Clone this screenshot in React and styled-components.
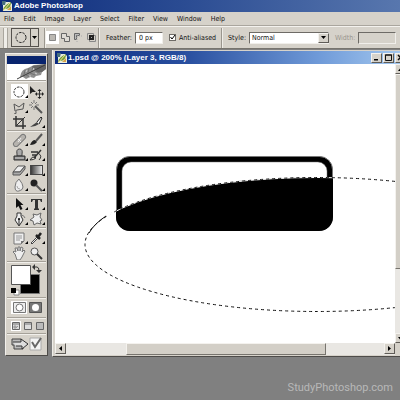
import React from "react";
import styled, { createGlobalStyle } from "styled-components";

const Global = createGlobalStyle`
  * { box-sizing: border-box; }
  body { margin: 0; background: #808080; }
  button, input, select { font: inherit; color: inherit; margin: 0; padding: 0; border-radius: 0; }
  svg { display: block; flex: none; }
`;

const Shell = styled.div`
  min-height: 100vh;
  display: flex;
  flex-direction: column;
  overflow: hidden;
  background: #808080;
  color: #111;
  font: 7px/12px "DejaVu Sans Condensed", "DejaVu Sans", sans-serif;
`;
const AppTitle = styled.header`
  display: flex;
  align-items: center;
  gap: 2px;
  height: 12px;
  padding-left: 2px;
  background: linear-gradient(90deg, #0d2b7b, #2a4b92 45%, #5877ae);
  color: #fff;
`;
const Heading = styled.h1`
  margin: 0;
  font: 700 8px/12px "Liberation Sans", Arial, sans-serif;
  white-space: nowrap;
`;
const MenuBar = styled.nav`
  display: flex;
  gap: 9px;
  height: 14px;
  padding-left: 4px;
  background: #d6d2ca;
  border-bottom: 1px solid #aaa69e;
`;
const MenuItem = styled.button`
  border: 0;
  background: none;
  line-height: 14px;
`;
const OptionsBar = styled.div`
  display: flex;
  align-items: center;
  height: 23px;
  padding-left: 3px;
  background: #d6d2ca;
  border-top: 1px solid #f4f2ee;
  border-bottom: 1px solid #77746e;
  white-space: nowrap;
  > * { flex: none; }
`;
const Grip = styled.span`
  width: 5px;
  height: 20px;
  margin-right: 3px;
  border: solid #aaa69e;
  border-width: 0 1px;
  background: #efede8;
`;
const ToolPick = styled.button`
  display: flex;
  align-items: center;
  width: 28px;
  height: 19px;
  border: 1px solid #55524e;
  background: #d6d2ca;
`;
const Divider = styled.span`
  width: 2px;
  height: 20px;
  margin: 0 ${(p) => p.$after}px 0 ${(p) => p.$before}px;
  border-left: 1px solid #9a968e;
  border-right: 1px solid #efede8;
`;
const ModeButton = styled.button`
  display: grid;
  place-items: center;
  width: 13px;
  height: 13px;
  border: 0;
  background: ${(p) => (p.$on ? "#fff" : "none")};
`;
const Field = styled.label`
  display: flex;
  align-items: center;
  gap: 3px;
  margin-right: ${(p) => p.$after}px;
  color: ${(p) => (p.$off ? "#99958e" : "#111")};
`;
const TextBox = styled.input`
  width: ${(p) => p.$width}px;
  height: 12px;
  border: 1px solid;
  border-color: #6e6b66 #f1efeb #f1efeb #6e6b66;
  padding-left: 3px;
  background: #fff;
  &:disabled { background: #d6d2ca; }
`;
const Check = styled.input`
  appearance: none;
  width: 7px;
  height: 7px;
  border: 1px solid #6e6b66;
  background: #fff;
  grid-area: 1 / 1;
`;
const Stack = styled.span`
  display: grid;
  align-items: center;
  > svg, > span { grid-area: 1 / 1; pointer-events: none; justify-self: end; }
`;
const Select = styled.select`
  appearance: none;
  grid-area: 1 / 1;
  width: 80px;
  height: 12px;
  padding-left: 2px;
  line-height: 10px;
  border: 1px solid;
  border-color: #6e6b66 #f1efeb #f1efeb #6e6b66;
  background: #fff;
`;
const Bevel = styled.button`
  display: grid;
  place-items: center;
  flex: none;
  width: 11px;
  height: ${(p) => p.$h || 10}px;
  border: 1px solid;
  border-color: #f4f2ee #5f5c57 #5f5c57 #f4f2ee;
  background: #d6d2ca;
`;
const Workspace = styled.main`
  display: flex;
  align-items: flex-start;
  gap: 4px;
  padding: 1px 0 0 5px;
  margin-right: -8px;
`;
const Toolbox = styled.aside`
  width: 43px;
  flex: none;
  margin-top: 3px;
  border: 1px solid;
  border-color: #f2f0ec #4e4c49 #4e4c49 #f2f0ec;
  padding: 2px 1px 1px;
  background: #d6d2ca;
`;
const Brand = styled.div`
  border-top: 8px solid #08246e;
  background: #fff;
  height: 24px;
  display: flex;
  justify-content: flex-end;
`;
const Group = styled.div`
  display: grid;
  grid-template-columns: 17px 17px;
  grid-auto-rows: 15px;
  padding: ${(p) => p.$pad || "1px 0 1px 4px"};
  border-top: 1px solid #a5a199;
  box-shadow: inset 0 1px #f1efeb;
`;
const Tool = styled.button`
  display: grid;
  place-items: center;
  border: 0;
  background: ${(p) => (p.$on ? "#fff" : "none")};
`;
const ModeRow = styled.div`
  display: flex;
  align-items: center;
  gap: 2px;
  height: ${(p) => p.$h}px;
  padding-left: 4px;
  border-top: 1px solid #a5a199;
  box-shadow: inset 0 1px #f1efeb;
`;
const RowButton = styled.button`
  display: grid;
  border: 0;
  background: none;
`;
const DocWindow = styled.section`
  flex: 1;
  min-width: 0;
  padding: 1px 2px 1px;
  background: #d6d2ca;
  border-left: 1px solid #efede8;
  border-bottom: 1px solid #4e4c49;
`;
const DocTitle = styled.header`
  display: flex;
  align-items: center;
  gap: 1px;
  height: 13px;
  padding-left: 2px;
  background: linear-gradient(90deg, #0c2c80, #2a50a0 38%, #6f9ad8 75%, #a6caf0);
  color: #fff;
`;
const Spacer = styled.span`
  flex: 1;
`;
const Pane = styled.div`
  display: grid;
  grid-template-columns: minmax(0, 1fr) 11px;
`;
const Canvas = styled.div`
  overflow: hidden;
  background: #fff;
`;
const VScroll = styled.div`
  display: flex;
  flex-direction: column;
  background: #e9e7e3;
`;
const HScroll = styled.div`
  display: flex;
  height: 12px;
  background: #e9e7e3;
`;
const Thumb = styled.span`
  border: 1px solid;
  border-color: #f4f2ee #77746e #77746e #f4f2ee;
  background: #d3cfc7;
  ${(p) => (p.$vertical ? "height: 195px;" : "width: 200px; margin-left: 60px; margin-right: auto;")}
`;
const Footer = styled.footer`
  margin-top: 23px;
  padding-right: 7px;
  text-align: right;
  color: #b8b8b8;
  font: 11px/16px Roboto, sans-serif;
`;

const Down = () => (
  <svg width="5" height="3" viewBox="0 0 5 3"><path d="M0 0h5L2.5 3z" /></svg>
);
const Leaf = () => (
  <svg width="10" height="10" viewBox="0 0 10 10">
    <path d="M1 1h7l2 2v7H1z" fill="#e9edde" />
    <path d="M0 0h4L3 4H0z" fill="#476f7d" />
    <path d="M1 9Q2 4 9 1 9 8 3 8z" fill="#719d36" />
    <path d="M1 10 8 2" stroke="#f4e39a" />
    <path d="m5 9 4-4v4z" fill="#d7a348" />
  </svg>
);
const FeatherArt = () => (
  <svg width="29" height="16" viewBox="0 0 29 16">
    <path d="M3 13Q4 5 11 4L17 1 29 0v5l-4 3-1 3-5 1-2 2-4-1-4 2-3-2z" fill="#8f8f8f" />
    <path d="M15 2 29 0v5l-4 3-5 0z" fill="#666" />
    <path d="M0 15Q10 10 28 1" fill="none" stroke="#3c3c3c" />
    <path d="m7 11 1-5m3 3 1-5m3 3 1-5m3 3 2-4M9 11l4 2m0-4 5 2m0-4 5 2" fill="none" stroke="#666" strokeWidth=".7" />
    <path d="m9 8 1-2m6 0 1-2M12 12l2 0m4-3 2 1" stroke="#cfcfcf" fill="none" />
  </svg>
);

const K = { fill: "none", stroke: "#333", strokeWidth: 1 };
const G = { fill: "#eee", stroke: "#555", strokeWidth: 1 };
const icons = {
  "Elliptical marquee": <circle cx="7" cy="7" r="5" {...K} strokeDasharray="2.5 1" />,
  Move: <><path d="M1 1v8l2.500-2H7z" fill="#222" /><path d="M7 9h7M10.500 5.500v7" {...K} /><path d="m10.500 4 2 2h-4zM10.500 14l2-2h-4zM15 9l-2-2v4zM6 9l2-2v4z" fill="#222" /></>,
  Lasso: <path d="M3 11 2 4l5 3 5-4-1 6-6 1q-2 0-1 2t-2 2" {...K} stroke="#555" />,
  "Magic wand": <><path d="m6 6 7 7" stroke="#555" strokeWidth="2" /><path d="M5 0v3M5 7v3M0 5h3M7 5h3M2 2l2 2M8 2 6 4M2 8l2-2" {...K} stroke="#777" /></>,
  Crop: <><path d="M4 1v10h10M1 4h10v10" {...K} strokeWidth="1.5" /><path d="m4 11 9-9" {...K} /></>,
  Slice: <><path d="m1 12 7-5 2 2q-4 3-9 3z" fill="#444" /><path d="m8 7 4-5 1 1-3 6" {...G} stroke="#222" /></>,
  "Healing brush": <><rect x="0" y="5" width="15" height="5" rx="2.500" transform="rotate(-45 7.500 7.500)" fill="#b6b3ae" stroke="#777" /><path d="m6 6 3 3M9 5 6 9" stroke="#eee" /></>,
  Brush: <><path d="m7 8 6-7" stroke="#555" strokeWidth="2" /><path d="M1 12q2-5 5-5l2 2q-2 3-7 3" fill="#222" /></>,
  "Clone stamp": <><path d="M5 6q-1-5 2.500-5T10 6v2H5z" fill="#aaa" stroke="#444" /><path d="M2 8h11v4H2z" fill="#777" stroke="#333" /><path d="M3 10h9" stroke="#ddd" /></>,
  "History brush": <><path d="m5 10 7-8M2 4h7M3 7h4" stroke="#333" strokeWidth="1.500" /><path d="M1 12q2-4 5-3l1 1q-2 2-6 2M9 5q5 3 1 7" {...K} /></>,
  Eraser: <><path d="m1 9 5-6h7L8 9z" {...G} /><path d="M1 9v3h7l5-6V3L8 9z" fill="#aaa" stroke="#555" /></>,
  Gradient: <rect x="1.500" y="2.500" width="12" height="9" fill="url(#grad)" stroke="#444" />,
  Blur: <><path d="M7 1q4 5 4 8t-4 4-4-4 4-8z" {...G} stroke="#777" /><path d="M5 8q0 3 3 3" stroke="#aaa" fill="none" /></>,
  Dodge: <><circle cx="5" cy="5" r="3.500" fill="#222" /><path d="m7 7 6 6" stroke="#555" strokeWidth="2" /></>,
  "Path selection": <path d="M4 1v10l2.500-2 2 4 2-1-2-4h3z" fill="#111" />,
  Type: <path d="M2 2h11v3h-1l-1-2H9v8l1 1v1H5v-1l1-1V3H4L3 5H2z" fill="#333" />,
  Pen: <><path d="M5 1h4v3l2 4-4 6-4-6 2-4z" {...G} stroke="#333" /><path d="M7 7v6" stroke="#222" /><circle cx="7" cy="7" r="1" /><path d="M9 3q3 0 4 3" {...K} stroke="#777" /></>,
  Shape: <path d="m5 5-1-3 4 1 4-2-1 4 2 3-2 1 1 3-4-1-3 2-1-4-3-1z" {...G} stroke="#666" />,
  Notes: <><path d="M2 2h10v8l-3 3H2z" {...G} stroke="#777" /><path d="M4 5h6M4 7h6M4 9h4" stroke="#999" /><path d="M9 13v-3h3" fill="#777" /></>,
  Eyedropper: <><path d="m2 12 7-7 1 1-7 7z" {...G} stroke="#444" /><path d="m7 4 4 4M9 6l3-4" stroke="#222" strokeWidth="2.500" /></>,
  Hand: <path d="m3 8-2-2 1-1 2 1-1-4 2 0 1 3V1h2l0 4 1-4 2 1-1 4 2-2 1 1-3 6-2 3H5z" {...G} stroke="#777" />,
  Zoom: <><circle cx="5.500" cy="5.500" r="3.500" {...G} stroke="#555" /><path d="m8 8 5 5" stroke="#333" strokeWidth="2" /></>,
};
const single = ["Move", "Magic wand", "Crop", "Hand", "Zoom"];
const ToolIcon = ({ name }) => (
  <svg width="17" height="15" viewBox="0 0 17 15">
    <defs><linearGradient id="grad"><stop stopColor="#333" /><stop offset="1" stopColor="#eee" /></linearGradient></defs>
    <g transform="translate(1 1)">{icons[name]}</g>
    {!single.includes(name) && <path d="M17 11v3h-3z" />}
  </svg>
);
const Tools = ({ names, pad }) => (
  <Group $pad={pad}>
    {names.map((n) => (
      <Tool key={n} aria-label={n} $on={n === "Elliptical marquee"}><ToolIcon name={n} /></Tool>
    ))}
  </Group>
);

const combine = {
  "New selection": <path d="M2.500 2.500h6v6h-6z" fill="#bbb8b2" stroke="#888" />,
  Add: <path d="M1.500 1.500h5v3h3v5h-5v-3h-3z" fill="#dedbd5" stroke="#666" />,
  Subtract: <><path d="M1.500 1.500h5v2h-3v4h-2z" fill="#bbb" stroke="#666" /><path d="M4 10V4h6" stroke="#aaa" fill="none" strokeDasharray="1 1" /></>,
  Intersect: <><path d="M1.500 1.500h6v6h-6zM3.500 3.500h6v6h-6z" fill="none" stroke="#888" /><path d="M4 4h3v3H4z" fill="#aaa" stroke="#222" strokeWidth="2" /></>,
};

const Drawing = () => (
  <svg width="342" height="279" viewBox="0 0 342 279">
    <defs>
      <clipPath id="frame"><rect x="61" y="92" width="217" height="75" rx="14" /></clipPath>
    </defs>
    <rect x="61.500" y="92.500" width="216" height="74" rx="13" fill="#000" stroke="#777" />
    <rect x="67" y="98" width="205" height="66" rx="9" fill="#fff" stroke="#777" strokeWidth=".5" />
    <ellipse cx="262" cy="180.500" rx="232" ry="67" clipPath="url(#frame)" />
    <ellipse cx="262" cy="180.500" rx="232" ry="67" fill="none" stroke="#fff" />
    <ellipse cx="262" cy="180.500" rx="232" ry="67" fill="none" stroke="#111" strokeDasharray="3 3" />
    <path d="M34 169Q39 160 51 152" fill="none" stroke="#111" />
    <path d="m52 152 5-3" stroke="#fff" strokeWidth="2" />
  </svg>
);

export default function App() {
  return (
    <Shell>
      <Global />
      <AppTitle><Leaf /><Heading>Adobe Photoshop</Heading></AppTitle>
      <MenuBar>
        {["File", "Edit", "Image", "Layer", "Select", "Filter", "View", "Window", "Help"].map((m) => (
          <MenuItem key={m}>{m}</MenuItem>
        ))}
      </MenuBar>
      <OptionsBar>
        <Grip />
        <ToolPick aria-label="Tool preset">
          <svg width="26" height="17" viewBox="0 0 26 17">
            <circle cx="9" cy="8.500" r="5" fill="none" stroke="#222" strokeDasharray="2.500 1" />
            <path d="M18.500 0v17" stroke="#55524e" /><path d="M20 7h5l-2.500 3z" />
          </svg>
        </ToolPick>
        <Divider $before={5} $after={0} />
        {Object.keys(combine).map((n, i) => (
          <ModeButton key={n} aria-label={n} $on={i === 0}>
            <svg width="11" height="11" viewBox="0 0 11 11">{combine[n]}</svg>
          </ModeButton>
        ))}
        <Divider $before={0} $after={6} />
        <Field $after={6}>Feather:<TextBox $width={28} defaultValue="0 px" /></Field>
        <Field $after={5}>
          <Stack>
            <Check type="checkbox" defaultChecked />
            <svg width="7" height="7" viewBox="0 0 7 7"><path d="m1.500 3 1.500 2 3-4" fill="none" stroke="#000" /></svg>
          </Stack>
          Anti-aliased
        </Field>
        <Divider $before={0} $after={5} />
        <Field $after={6}>
          Style:
          <Stack>
            <Select defaultValue="Normal"><option>Normal</option></Select>
            <Bevel as="span"><Down /></Bevel>
          </Stack>
        </Field>
        <Field $off $after={0}>Width:<TextBox $width={38} disabled /></Field>
      </OptionsBar>
      <Workspace>
        <Toolbox>
          <Brand><FeatherArt /></Brand>
          <Tools pad="3px 0 1px 4px" names={["Elliptical marquee", "Move", "Lasso", "Magic wand", "Crop", "Slice"]} />
          <Tools names={["Healing brush", "Brush", "Clone stamp", "History brush", "Eraser", "Gradient", "Blur", "Dodge"]} />
          <Tools pad="2px 0 1px 4px" names={["Path selection", "Type", "Pen", "Shape"]} />
          <Tools pad="2px 0 1px 4px" names={["Notes", "Eyedropper", "Hand", "Zoom"]} />
          <ModeRow $h={36}>
            <RowButton aria-label="Foreground and background colors">
              <svg width="34" height="33" viewBox="0 0 34 33">
                <path d="M9.500 11.500h19v19h-19z" stroke="#777" />
                <path d="M.5 2.500h19v19H.5z" fill="#fff" stroke="#555" />
                <path d="M3 27h5v5H3z" fill="#fff" stroke="#888" /><path d="M0 25h5v5H0z" />
                <path d="M23 4h3q2 0 2 4" fill="none" stroke="#333" /><path d="m21 4 3-3v6zM25 7h6l-3 3z" fill="#333" />
              </svg>
            </RowButton>
          </ModeRow>
          <ModeRow $h={20}>
            <RowButton aria-label="Standard mode">
              <svg width="16" height="13" viewBox="0 0 16 13"><path d="M0 0h16v13H0z" fill="#fff" /><path d="M2.500 1.500h12v10h-12z" fill="#eee" stroke="#777" /><circle cx="8.500" cy="6.500" r="3.500" fill="#fff" stroke="#777" /></svg>
            </RowButton>
            <RowButton aria-label="Quick mask mode">
              <svg width="14" height="13" viewBox="0 0 14 13"><path d="M.5 1.500h12v10H.5z" fill="#777" stroke="#555" /><circle cx="6.500" cy="6.500" r="3.500" fill="#fff" /></svg>
            </RowButton>
          </ModeRow>
          <ModeRow $h={16}>
            {[0, 1, 2].map((i) => (
              <RowButton key={i} aria-label={`Screen mode ${i + 1}`}>
                <svg width="10" height="10" viewBox="0 0 10 10">
                  {i === 0 && <path d="M0 0h10v10H0z" fill="#fff" />}
                  <path d="M1.500 1.500h7v7h-7z" fill={i === 2 ? "#bbb" : "#ddd"} stroke="#666" />
                  {i < 2 && <path d="M2 3h6" stroke="#777" />}
                  {i === 0 && <path d="M3 5h2v2H3zM5 7l2-2" stroke="#999" fill="#bbb" />}
                </svg>
              </RowButton>
            ))}
          </ModeRow>
          <ModeRow $h={21}>
            <RowButton aria-label="Edit in ImageReady">
              <svg width="34" height="14" viewBox="0 0 34 14">
                <path d="M1 2h9l2 2v8H3V8H1z" fill="#bbb" stroke="#444" /><path d="M2 5h8V2l7 5-6 5V9H5" fill="#ddd" stroke="#333" />
                <path d="M19 1h11v12H19z" fill="#f4f4f4" stroke="#aaa" /><path d="m21 5 3 5 6-9" fill="none" stroke="#666" strokeWidth="2" />
              </svg>
            </RowButton>
          </ModeRow>
        </Toolbox>
        <DocWindow>
          <DocTitle>
            <Leaf />
            <Heading as="h2">1.psd @ 200% (Layer 3, RGB/8)</Heading>
            <Spacer />
            <Bevel aria-label="Minimize"><svg width="7" height="7" viewBox="0 0 7 7"><path d="M1 5h4v1.500H1z" /></svg></Bevel>
            <Bevel aria-label="Maximize"><svg width="7" height="7" viewBox="0 0 7 7"><path d="M.5 1h6v5.500h-6z" fill="none" stroke="#111" /><path d="M0 1h7" stroke="#111" /></svg></Bevel>
            <Bevel aria-label="Close"><svg width="7" height="7" viewBox="0 0 7 7"><path d="m1 1 5 5M6 1 1 6" stroke="#111" strokeWidth="1.500" /></svg></Bevel>
          </DocTitle>
          <Pane>
            <Canvas><Drawing /></Canvas>
            <VScroll>
              <Bevel aria-label="Scroll up"><svg width="5" height="3" viewBox="0 0 5 3"><path d="M0 3h5L2.500 0z" /></svg></Bevel>
              <Thumb $vertical />
              <Spacer />
              <Bevel aria-label="Scroll down"><Down /></Bevel>
            </VScroll>
            <HScroll>
              <Bevel $h={11} aria-label="Scroll left"><svg width="3" height="5" viewBox="0 0 3 5"><path d="M3 0v5L0 2.500z" /></svg></Bevel>
              <Thumb />
              <Bevel $h={11} aria-label="Scroll right"><svg width="3" height="5" viewBox="0 0 3 5"><path d="M0 0v5l3-2.500z" /></svg></Bevel>
            </HScroll>
          </Pane>
        </DocWindow>
      </Workspace>
      <Footer>StudyPhotoshop.com</Footer>
    </Shell>
  );
}
